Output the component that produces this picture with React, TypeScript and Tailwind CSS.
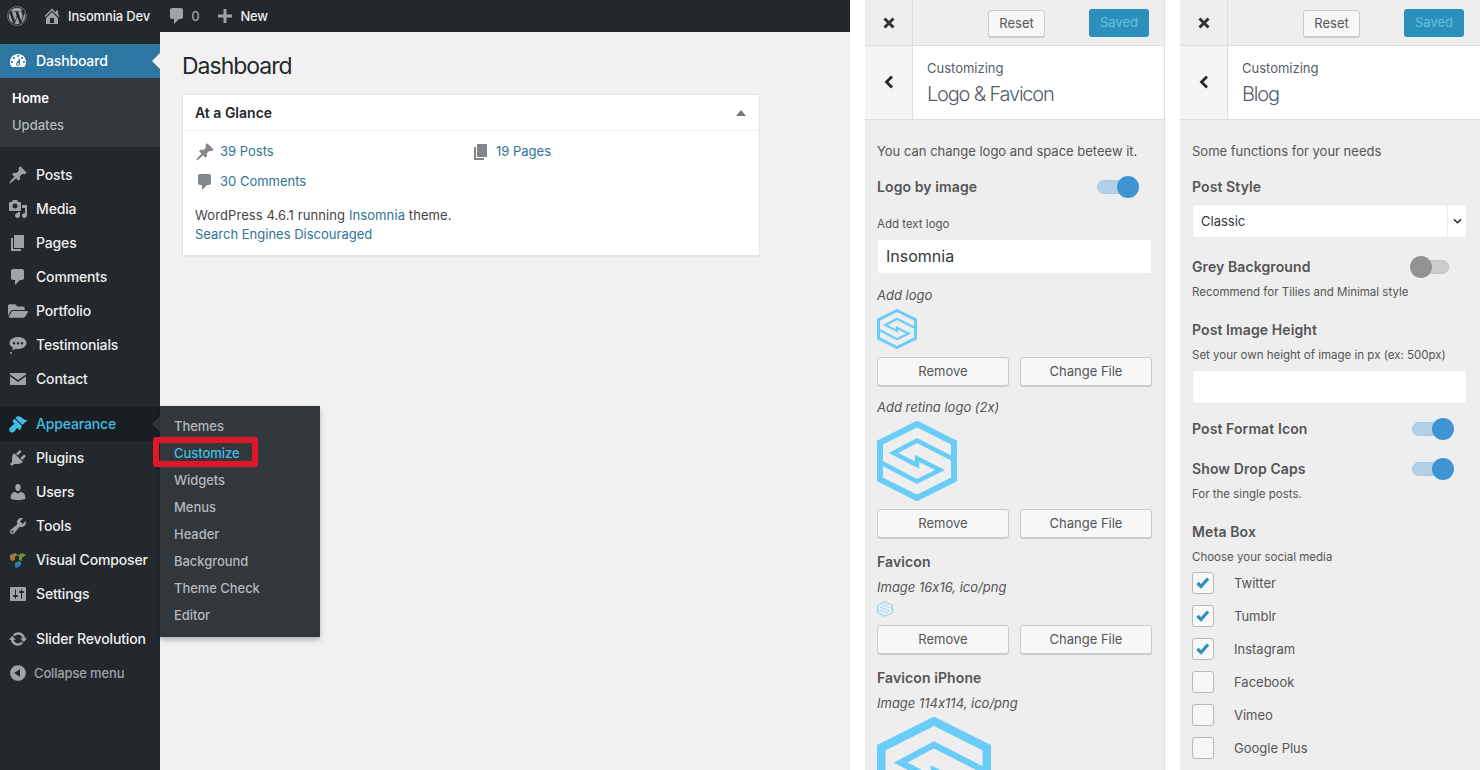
import React from 'react';
import { FaWordpress, FaFolderOpen } from 'react-icons/fa';

const icons = {
  dashboard:
    'M3.76 16h12.48c1.1-1.37 1.76-3.11 1.76-5 0-4.42-3.58-8-8-8s-8 3.58-8 8c0 1.89.66 3.63 1.76 5zM10 4c.55 0 1 .45 1 1s-.45 1-1 1-1-.45-1-1 .45-1 1-1zM6 6c.55 0 1 .45 1 1s-.45 1-1 1-1-.45-1-1 .45-1 1-1zm8 0c.55 0 1 .45 1 1s-.45 1-1 1-1-.45-1-1 .45-1 1-1zm-5.37 5.55L12 7v6c0 1.1-.9 2-2 2s-2-.9-2-2c0-.57.24-1.08.63-1.45zM4 10c.55 0 1 .45 1 1s-.45 1-1 1-1-.45-1-1 .45-1 1-1zm12 0c.55 0 1 .45 1 1s-.45 1-1 1-1-.45-1-1 .45-1 1-1zm-5 3c0-.55-.45-1-1-1s-1 .45-1 1 .45 1 1 1 1-.45 1-1z',
  post: 'M10.44 3.02l1.82-1.82 6.36 6.35-1.83 1.82c-1.05-.68-2.48-.57-3.41.36l-.75.75c-.92.93-1.04 2.35-.35 3.41l-1.83 1.82-2.41-2.41-2.8 2.79c-.42.42-3.38 2.71-3.8 2.29s1.86-3.39 2.28-3.81l2.79-2.79L4.1 9.36l1.83-1.82c1.05.69 2.48.57 3.4-.36l.75-.75c.93-.92 1.05-2.35.36-3.41z',
  media:
    'M13 11V4c0-.55-.45-1-1-1h-1.67L9 1H5L3.67 3H2c-.55 0-1 .45-1 1v7c0 .55.45 1 1 1h10c.55 0 1-.45 1-1zM7 4.5c1.38 0 2.5 1.12 2.5 2.5S8.38 9.5 7 9.5 4.5 8.38 4.5 7 5.62 4.5 7 4.5zM14 6h5v10.5c0 1.38-1.12 2.5-2.5 2.5S14 17.88 14 16.5s1.12-2.5 2.5-2.5c.17 0 .34.02.5.05V9h-3V6zm-4 8.05V13h2v3.5c0 1.38-1.12 2.5-2.5 2.5S7 17.88 7 16.5 8.12 14 9.5 14c.17 0 .34.02.5.05z',
  page: 'M6 15V2h10v13H6zm-1 1h8v2H3V5h2v11z',
  comment: 'M5 2h9c1.1 0 2 .9 2 2v7c0 1.1-.9 2-2 2h-2l-5 5v-5H5c-1.1 0-2-.9-2-2V4c0-1.1.9-2 2-2z',
  testimonial:
    'M10 2c4.4 0 8.500 2.300 8.500 6s-4.100 6-8.500 6c-.8 0-1.600-.1-2.300-.2C6.400 14.700 5 15 3.800 15c.7-.6 1.200-1.400 1.300-2.300C3 11.700 1.500 10 1.500 8c0-3.700 4.100-6 8.500-6zM6 7a1.200 1.200 0 100 2.400A1.200 1.200 0 006 7zm4 0a1.200 1.200 0 100 2.400A1.200 1.200 0 0010 7zm4 0a1.200 1.200 0 100 2.400A1.200 1.200 0 0014 7zM3 17a1 1 0 110 2 1 1 0 010-2z',
  mail: 'M2 4h16v1.500L10 11 2 5.500V4zm0 3.300L10 13l8-5.700V16H2V7.300z',
  appearance:
    'M14.48 11.06L7.41 3.99l1.5-1.5c.5-.56 2.3-.47 3.51.32 1.21.8 1.43 1.28 2.91 2.1 1.18.64 2.45 1.26 4.45.85zm-.71.71L6.7 4.7 4.93 6.47c-.39.39-.39 1.02 0 1.41l1.06 1.06c.39.39.39 1.03 0 1.42-.6.6-1.43 1.11-2.21 1.69-.35.26-.7.53-1.01.84C1.43 13.23.78 15.4 1.600 17.100c.9 1.730 3.400 1.900 4.600.74.31-.31.58-.66.84-1.01.58-.78 1.09-1.61 1.69-2.21.39-.39 1.03-.39 1.42 0l1.06 1.06c.39.39 1.02.39 1.41 0z',
  plugins:
    'M13.11 4.36L9.87 7.6 8 5.73l3.24-3.24c.35-.34 1.05-.2 1.56.32.52.51.66 1.21.31 1.55zm-8 1.77l.91-1.12 9.01 9.01-1.19.84c-.71.71-2.63 1.16-3.82 1.16H6.14L4.9 17.26c-.59.59-1.54.59-2.12 0-.59-.58-.59-1.53 0-2.12l1.24-1.24v-3.88c0-1.13.4-3.19 1.09-3.89zm7.26 3.97l3.24-3.24c.34-.35 1.04-.21 1.55.31.52.51.66 1.21.31 1.55l-3.24 3.25z',
  users:
    'M10 9.25c-2.27 0-2.73-3.44-2.73-3.44C7 4.02 7.82 2 9.97 2c2.16 0 2.98 2.02 2.71 3.81 0 0-.41 3.44-2.68 3.44zm0 2.57L12.72 10c2.39 0 4.52 2.33 4.52 4.53v2.49s-3.65 1.13-7.24 1.13c-3.65 0-7.24-1.13-7.24-1.13v-2.49c0-2.25 1.94-4.48 4.47-4.48z',
  tools:
    'M16.68 9.77c-1.34 1.34-3.3 1.67-4.95.99l-5.41 6.52c-.99.99-2.59.99-3.58 0s-.99-2.59 0-3.57l6.52-5.42c-.68-1.65-.35-3.61.99-4.95 1.28-1.28 3.12-1.62 4.72-1.06l-2.89 2.89 2.82 2.82 2.86-2.87c.53 1.58.18 3.39-1.08 4.65zM3.81 16.21c.4.39 1.04.39 1.43 0 .4-.4.4-1.04 0-1.43-.39-.4-1.03-.4-1.43 0-.39.39-.39 1.03 0 1.43z',
  settings:
    'M18 16V4c0-.55-.45-1-1-1H3c-.55 0-1 .45-1 1v12c0 .55.45 1 1 1h14c.55 0 1-.45 1-1zM8 11h1c.55 0 1 .45 1 1s-.45 1-1 1H8v1.5c0 .28-.22.5-.5.5s-.5-.22-.5-.5V13H6c-.55 0-1-.45-1-1s.45-1 1-1h1V5.5c0-.28.22-.5.5-.5s.5.22.5.5V11zm5-2h-1c-.55 0-1-.45-1-1s.45-1 1-1h1V5.5c0-.28.22-.5.5-.5s.5.22.5.5V7h1c.55 0 1 .45 1 1s-.45 1-1 1h-1v5.5c0 .28-.22.5-.5.5s-.5-.22-.5-.5V9z',
  update:
    'M10.2 3.28c3.53 0 6.43 2.61 6.92 6h2.08l-3.5 4-3.5-4h2.32c-.45-1.97-2.21-3.45-4.32-3.45-1.45 0-2.73.71-3.54 1.78L4.95 5.66C6.23 4.2 8.11 3.28 10.2 3.28zm-.4 13.44c-3.52 0-6.43-2.61-6.92-6H.8l3.5-4c1.17 1.33 2.33 2.67 3.5 4H5.48c.45 1.97 2.21 3.45 4.32 3.45 1.45 0 2.73-.71 3.54-1.78l1.71 1.95c-1.28 1.46-3.15 2.38-5.25 2.38z',
  collapse: 'M10 2.160c4.330 0 7.840 3.510 7.840 7.840s-3.510 7.840-7.840 7.840S2.160 14.330 2.160 10 5.670 2.160 10 2.160zm2 11.720V6.120L6.180 9.970z',
  home: 'M16 8.5l1.53 1.53-1.06 1.06L10 4.62l-6.47 6.47-1.06-1.06L10 2.5l4 4v-2h2v4zm-6-2.46l6 5.99V18H4v-5.97zM12 17v-5H8v5h4z',
  plus: 'M17 8.500v3h-5.500V17h-3v-5.500H3v-3h5.500V3h3v5.500H17z',
};

function Dash({ name, className }: { name: keyof typeof icons; className: string }) {
  return (
    <svg viewBox="0 0 20 20" fill="currentColor" className={className}>
      <path d={icons[name]} />
    </svg>
  );
}

function VcIcon() {
  return (
    <svg viewBox="0 0 20 20" className="w-5 h-5">
      <path d="M2 5l5-2 3 2-3 2v3l-3 1-2-2z" fill="#a5773c" />
      <path d="M10 5l4-2 4 2-4 3v3l-3-1V7z" fill="#6f8f3a" />
      <path d="M7 13l4-2 2 1v3l-4 3-2-1z" fill="#2b7fa8" />
    </svg>
  );
}

function SLogo({ size, stroke = 6 }: { size: number; stroke?: number }) {
  return (
    <svg width={size} height={size} viewBox="0 0 80 80" fill="none" stroke="#6accf8" className="block shrink-0">
      <path strokeWidth={stroke} d="M40 3 L77 21.500 V58.500 L40 77 L3 58.500 V21.500 Z" />
      <path strokeWidth={stroke - 1.5} d="M77 38.500 L40 19.500 L16.500 32 L40 44 V37.500 L63 49 L40 60.500 L3 41" />
    </svg>
  );
}

const menuTop = [
  { label: 'Posts', icon: 'post' },
  { label: 'Media', icon: 'media' },
  { label: 'Pages', icon: 'page' },
  { label: 'Comments', icon: 'comment' },
] as const;

const flyout = ['Themes', 'Customize', 'Widgets', 'Menus', 'Header', 'Background', 'Theme Check', 'Editor'];

function MenuRow({ label, children }: { label: string; children: React.ReactNode }) {
  return (
    <div className="h-[34px] flex items-center text-[14px] font-medium tracking-[-0.15px] text-[#eeeeee]">
      <span className="w-9 pl-[8px] flex items-center text-[#9ea3a8]">{children}</span>
      <span className="mb-[2px]">{label}</span>
    </div>
  );
}

function Sidebar() {
  return (
    <aside className="w-[160px] shrink-0 bg-[#23282d] pt-3">
      <div className="relative h-[34px] flex items-center bg-[#2e76a2] text-[14px] font-medium tracking-[-0.15px] text-white">
        <span className="w-9 pl-[8px] flex items-center">
          <Dash name="dashboard" className="w-5 h-5" />
        </span>
        <span className="mb-[2px]">Dashboard</span>
        <span className="absolute right-0 top-[9px] border-y-[8px] border-r-[8px] border-y-transparent border-r-[#f1f1f1]" />
      </div>
      <div className="bg-[#32373c] pt-[7px] pb-[8px] text-[13px] font-medium">
        <div className="h-[27px] pl-3 flex items-center text-white font-semibold">Home</div>
        <div className="h-[27px] pl-3 flex items-center text-[#b4b9be]">Updates</div>
      </div>

      <div className="mt-[11px]">
        {menuTop.map((item) => (
          <MenuRow key={item.label} label={item.label}>
            <Dash name={item.icon} className="w-5 h-5" />
          </MenuRow>
        ))}
        <MenuRow label="Portfolio">
          <FaFolderOpen className="w-5 h-5" />
        </MenuRow>
        <MenuRow label="Testimonials">
          <Dash name="testimonial" className="w-5 h-5" />
        </MenuRow>
        <MenuRow label="Contact">
          <Dash name="mail" className="w-5 h-5" />
        </MenuRow>
      </div>

      <div className="relative mt-[11px] h-[34px] flex items-center bg-[#191e23] text-[14px] font-medium tracking-[-0.15px] text-[#45bbe6]">
        <span className="w-9 pl-[8px] flex items-center">
          <Dash name="appearance" className="w-5 h-5" />
        </span>
        <span className="mb-[2px]">Appearance</span>
        <span className="absolute right-0 top-[9px] border-y-[8px] border-r-[8px] border-y-transparent border-r-[#32373c]" />
        {/* Flyout menu */}
        <div className="absolute left-[160px] top-[-1px] w-[160px] z-10 bg-[#32373c] pt-[7px] pb-[8px] shadow-[0_3px_5px_rgba(0,0,0,0.25)] text-[13px] tracking-[-0.05px] font-medium text-[#b4b9be]">
          {flyout.map((item) => (
            <div key={item} className={item === 'Customize' ? 'h-[27px] pl-[14px] flex items-center text-[#45bbe6]' : 'h-[27px] pl-[14px] flex items-center'}>
              {item}
            </div>
          ))}
          <div className="absolute left-[-7px] top-[31px] w-[105px] h-[30px] border-[6px] border-[#e0162b] rounded-[3px]" />
        </div>
      </div>

      <MenuRow label="Plugins">
        <Dash name="plugins" className="w-5 h-5" />
      </MenuRow>
      <MenuRow label="Users">
        <Dash name="users" className="w-5 h-5" />
      </MenuRow>
      <MenuRow label="Tools">
        <Dash name="tools" className="w-5 h-5" />
      </MenuRow>
      <MenuRow label="Visual Composer">
        <VcIcon />
      </MenuRow>
      <MenuRow label="Settings">
        <Dash name="settings" className="w-5 h-5" />
      </MenuRow>

      <div className="mt-[11px]">
        <MenuRow label="Slider Revolution">
          <Dash name="update" className="w-5 h-5" />
        </MenuRow>
      </div>
      <div className="h-[34px] flex items-center text-[13px] font-medium tracking-[-0.15px] text-[#9ea3a8]">
        <span className="w-[34px] pl-[8px] flex items-center">
          <Dash name="collapse" className="w-5 h-5" />
        </span>
        <span className="mt-[2px]">Collapse menu</span>
      </div>
    </aside>
  );
}

function TopBar() {
  return (
    <header className="h-8 shrink-0 bg-[#23282d] flex items-center text-[13px] font-medium tracking-[-0.15px] text-[#eeeeee]">
      <FaWordpress className="ml-[7px] w-[20px] h-[20px] text-[#9ea3a8]" />
      <Dash name="home" className="ml-[15px] w-[20px] h-[20px] text-[#9ea3a8]" />
      <span className="ml-[6px] mt-[2px]">Insomnia Dev</span>
      <Dash name="comment" className="ml-[17px] w-[20px] h-[20px] text-[#9ea3a8]" />
      <span className="ml-[4px] mt-[2px] text-[#9ea3a8]">0</span>
      <Dash name="plus" className="ml-[16px] w-[20px] h-[20px] text-[#9ea3a8]" />
      <span className="ml-[5px] mt-[2px]">New</span>
    </header>
  );
}

function Glance() {
  return (
    <section className="mt-3 w-[578px] h-[162px] bg-white border border-[#e5e5e5] shadow-[0_1px_1px_rgba(0,0,0,0.04)]">
      <div className="h-[36px] px-3 flex items-center justify-between border-b border-[#eeeeee] text-[14px] font-semibold text-[#23282d]">
        <span>At a Glance</span>
        <span className="mr-[1px] border-x-[5px] border-b-[6px] border-x-transparent border-b-[#72777c]" />
      </div>
      <div className="px-3 pt-[11px] text-[13px] text-[#2f7398]">
        <div className="grid grid-cols-2">
          <div className="h-[20px] flex items-center gap-[5px]">
            <Dash name="post" className="w-5 h-5 text-[#82878c] -mt-[1px]" />
            <span>39 Posts</span>
          </div>
          <div className="h-[20px] flex items-center gap-[5px]">
            <Dash name="page" className="w-5 h-5 text-[#82878c] -mt-[1px]" />
            <span>19 Pages</span>
          </div>
          <div className="mt-[10px] h-[20px] flex items-center gap-[5px]">
            <Dash name="comment" className="w-5 h-5 text-[#82878c] -mt-[1px]" />
            <span>30 Comments</span>
          </div>
        </div>
        <p className="mt-[14px] h-[19px] leading-[19px] tracking-[0.1px] text-[#444444]">
          WordPress 4.6.1 running <span className="text-[#2f7398]">Insomnia</span> theme.
        </p>
        <p className="h-[19px] leading-[19px]">Search Engines Discouraged</p>
      </div>
    </section>
  );
}

function PanelHeader({ title }: { title: string }) {
  return (
    <>
      <div className="h-[46px] shrink-0 flex border-b border-[#dddddd]">
        <div className="w-[48px] shrink-0 flex items-center justify-center border-r border-[#dddddd] text-[#333333]">
          <svg viewBox="0 0 12 12" className="w-3 h-3" stroke="currentColor" strokeWidth="3" fill="none">
            <path d="M1.500 1.500l9 9M10.500 1.500l-9 9" />
          </svg>
        </div>
        <button className="ml-[75px] mt-[10px] w-[57px] h-[27px] bg-[#f7f7f7] border border-[#cccccc] rounded-[3px] shadow-[0_1px_0_#cccccc] text-[13px] text-[#555555]">
          Reset
        </button>
        <button className="ml-[44px] mt-[9px] w-[60px] h-[28px] bg-[#2b90bb] rounded-[3px] text-[13px] text-[#62c1de]">
          Saved
        </button>
      </div>
      <div className="h-[74px] shrink-0 flex bg-white border-b border-[#dddddd]">
        <div className="w-[48px] shrink-0 bg-[#f5f5f5] flex items-center justify-center border-r border-[#dddddd] text-[#23282d]">
          <svg viewBox="0 0 10 14" className="ml-[1px] -mt-[1px] w-[10px] h-[14px]" stroke="currentColor" strokeWidth="2.800" fill="none">
            <path d="M8 1.500L2.500 7 8 12.500" />
          </svg>
        </div>
        <div className="pl-[14px] pt-[13px]">
          <div className="h-[18px] leading-[18px] text-[13px] text-[#555d66]">Customizing</div>
          <div className="mt-[4px] h-[26px] leading-[26px] text-[20px] font-light tracking-[-1.2px] text-[#555d66]">{title}</div>
        </div>
      </div>
    </>
  );
}

function Toggle({ on, className }: { on: boolean; className: string }) {
  if (on) {
    return (
      <span className={`relative block w-[42px] h-[22px] ${className}`}>
        <span className="absolute left-0 top-[4px] w-[38px] h-[14px] rounded-full bg-[#b2d0e7] border border-[#a8c8e0]" />
        <span className="absolute right-0 top-0 w-[22px] h-[22px] rounded-full bg-[#3f94d3]" />
      </span>
    );
  }
  return (
    <span className={`relative block w-[39px] h-[22px] ${className}`}>
      <span className="absolute right-0 top-[4px] w-[36px] h-[14px] rounded-full bg-[#cccccc] border border-[#c4c4c4]" />
      <span className="absolute left-0 top-0 w-[22px] h-[22px] rounded-full bg-[#929292]" />
    </span>
  );
}

function RowLabel({ children }: { children: React.ReactNode }) {
  return <span className="mb-[2px] text-[14px] font-semibold tracking-[0.1px] text-[#555555]">{children}</span>;
}

function Heading({ children, className }: { children: React.ReactNode; className: string }) {
  return <div className={`h-[20px] leading-[20px] text-[14px] font-semibold tracking-[0.1px] text-[#555555] ${className}`}>{children}</div>;
}

function Hint({ children, className }: { children: React.ReactNode; className: string }) {
  return <div className={`h-[16px] leading-[16px] text-[11.5px] text-[#555555] ${className}`}>{children}</div>;
}

function Note({ children, className }: { children: React.ReactNode; className: string }) {
  return <div className={`h-[20px] leading-[20px] text-[13px] italic [font-feature-settings:'calt'_0] text-[#555555] ${className}`}>{children}</div>;
}

function FileButtons() {
  return (
    <div className="mt-2 flex gap-[11px] w-[275px]">
      <button className="w-[132px] h-[29px] bg-[#f7f7f7] border border-[#cccccc] rounded-[3px] shadow-[0_1px_0_#cccccc] text-[13px] text-[#555555]">Remove</button>
      <button className="w-[132px] h-[29px] bg-[#f7f7f7] border border-[#cccccc] rounded-[3px] shadow-[0_1px_0_#cccccc] text-[13px] text-[#555555]">Change File</button>
    </div>
  );
}

function LogoPanel() {
  return (
    <div className="w-[300px] shrink-0 h-full overflow-hidden bg-[#eeeeee] border-r border-[#dddddd] flex flex-col">
      <PanelHeader title="Logo & Favicon" />
      <div className="pl-3 w-[287px]">
        <p className="mt-[21px] h-[20px] leading-[20px] text-[13px] text-[#555555]">You can change logo and space beteew it.</p>
        <div className="mt-[14px] h-[24px] flex items-center justify-between">
          <RowLabel>Logo by image</RowLabel>
          <Toggle on className="mr-[13px]" />
        </div>
        <Hint className="mt-[17px]">Add text logo</Hint>
        <div className="mt-[7px] h-[35px] px-[8px] pb-[2px] flex items-center bg-white border border-[#eeeeee] rounded-[2px] text-[16px] text-[#32373c]">Insomnia</div>
        <Note className="mt-[11px]">Add logo</Note>
        <div className="mt-1">
          <SLogo size={40} />
        </div>
        <FileButtons />
        <Note className="mt-[11px]">Add retina logo (2x)</Note>
        <div className="mt-1">
          <SLogo size={80} />
        </div>
        <FileButtons />
        <Heading className="mt-[14px]">Favicon</Heading>
        <Note className="mt-[5px]">Image 16x16, ico/png</Note>
        <div className="mt-1">
          <SLogo size={16} stroke={4} />
        </div>
        <FileButtons />
        <Heading className="mt-[14px]">Favicon iPhone</Heading>
        <Note className="mt-[5px]">Image 114x114, ico/png</Note>
        <div className="mt-1">
          <SLogo size={114} />
        </div>
      </div>
    </div>
  );
}

const socials = [
  { label: 'Twitter', checked: true },
  { label: 'Tumblr', checked: true },
  { label: 'Instagram', checked: true },
  { label: 'Facebook', checked: false },
  { label: 'Vimeo', checked: false },
  { label: 'Google Plus', checked: false },
  { label: '', checked: false },
];

function BlogPanel() {
  return (
    <div className="w-[300px] shrink-0 h-full overflow-hidden bg-[#eeeeee] flex flex-col">
      <PanelHeader title="Blog" />
      <div className="pl-3 w-[287px]">
        <p className="mt-[21px] h-[20px] leading-[20px] text-[13px] text-[#555555]">Some functions for your needs</p>
        <Heading className="mt-4">Post Style</Heading>
        <div className="mt-[7px] h-[34px] flex items-center bg-white border border-[#e8e8e8] rounded-[2px] text-[13px] text-[#32373c]">
          <span className="flex-1 pl-[8px] pt-[2px]">Classic</span>
          <span className="w-[19px] h-full flex items-center justify-center border-l border-[#eeeeee]">
            <svg viewBox="0 0 10 6" className="w-[9px] h-[6px]" stroke="#23282d" strokeWidth="1.600" fill="none">
              <path d="M1 1l4 4 4-4" />
            </svg>
          </span>
        </div>
        <div className="mt-[17px] h-[24px] flex items-center justify-between">
          <RowLabel>Grey Background</RowLabel>
          <Toggle on={false} className="mr-[18px]" />
        </div>
        <Hint className="mt-[5px]">Recommend for Tilies and Minimal style</Hint>
        <Heading className="mt-5">Post Image Height</Heading>
        <Hint className="mt-[7px]">Set your own height of image in px (ex: 500px)</Hint>
        <div className="mt-[7px] h-[34px] bg-white border border-[#e8e8e8] rounded-[2px]" />
        <div className="mt-[13px] h-[24px] flex items-center justify-between">
          <RowLabel>Post Format Icon</RowLabel>
          <Toggle on className="mr-[13px]" />
        </div>
        <div className="mt-4 h-[24px] flex items-center justify-between">
          <RowLabel>Show Drop Caps</RowLabel>
          <Toggle on className="mr-[13px]" />
        </div>
        <Hint className="mt-[5px]">For the single posts.</Hint>
        <Heading className="mt-5">Meta Box</Heading>
        <Hint className="mt-[7px]">Choose your social media</Hint>
        <div className="mt-[7px] flex flex-col gap-[11px]">
          {socials.map((item) => (
            <div key={item.label} className="h-[22px] flex items-center text-[13px] text-[#555555]">
              <span className="w-[22px] h-[22px] shrink-0 flex items-center justify-center bg-[#f7f7f7] border border-[#b4b9be] rounded-[3px]">
                {item.checked && (
                  <svg viewBox="0 0 14 12" className="w-[14px] h-[12px]" stroke="#2b90bb" strokeWidth="3.200" fill="none">
                    <path d="M1.500 6l3.500 3.500L12 1.500" />
                  </svg>
                )}
              </span>
              <span className="ml-5 pt-[2px]">{item.label}</span>
            </div>
          ))}
        </div>
      </div>
    </div>
  );
}

export default function App() {
  return (
    <div className="w-[1480px] h-[770px] overflow-hidden flex bg-white font-['Inter','Liberation_Sans',sans-serif]">
      <div className="w-[850px] shrink-0 h-full flex flex-col">
        <TopBar />
        <div className="flex flex-1 min-h-0">
          <Sidebar />
          <main className="flex-1 bg-[#f1f1f1] pl-[22px] pt-[18px]">
            <h1 className="h-[32px] leading-[32px] text-[23px] tracking-[-1px] text-[#23282d]">Dashboard</h1>
            <Glance />
          </main>
        </div>
      </div>
      <div className="w-[15px] shrink-0" />
      <LogoPanel />
      <div className="w-[15px] shrink-0" />
      <BlogPanel />
    </div>
  );
}
